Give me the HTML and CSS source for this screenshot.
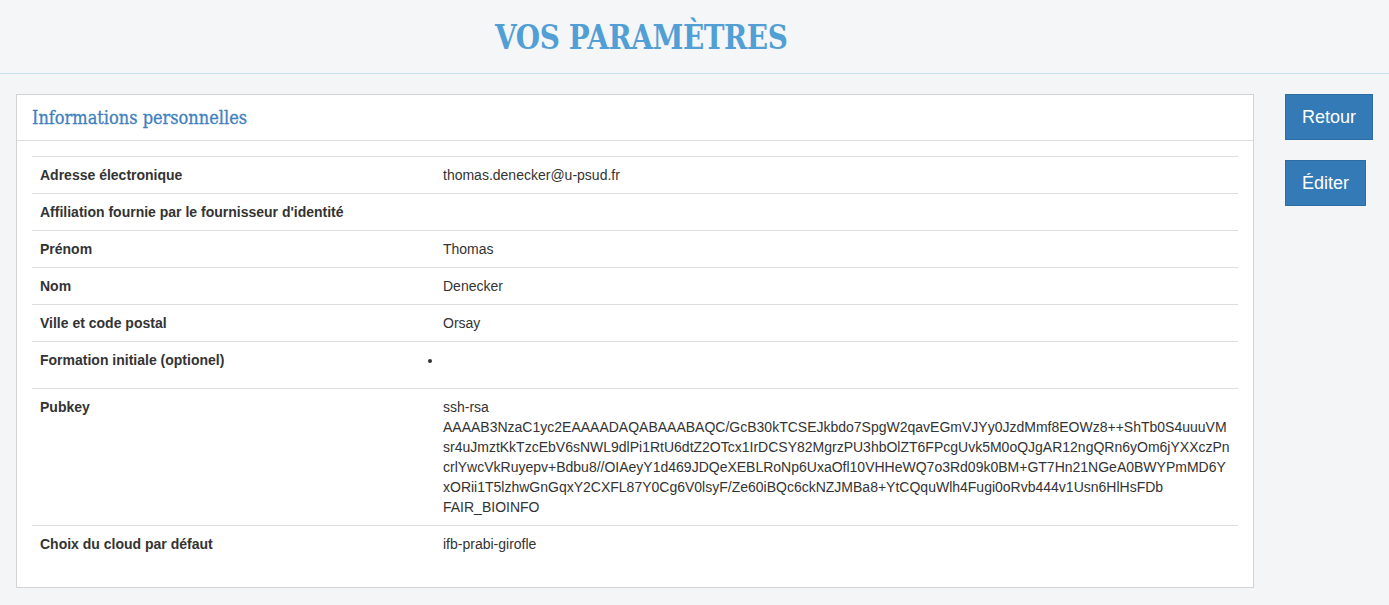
FILE: index.html
```html
<!DOCTYPE html>
<html lang="fr">
<head>
<meta charset="utf-8">
<title>Vos paramètres</title>
<link rel="stylesheet" href="styles.css">
</head>
<body>
<header class="page-header">
  <div class="header-main"><h1 class="page-title"><span class="title-text">VOS PARAMÈTRES</span></h1></div>
  <div class="header-side"></div>
</header>
<div class="layout">
  <main class="main-col">
    <section class="panel">
      <div class="panel-heading"><h3 class="panel-title">Informations personnelles</h3></div>
      <div class="panel-body">
        <table class="info-table">
          <tbody>
            <tr><th>Adresse électronique</th><td>thomas.denecker@u-psud.fr</td></tr>
            <tr><th>Affiliation fournie par le fournisseur d'identité</th><td></td></tr>
            <tr><th>Prénom</th><td>Thomas</td></tr>
            <tr><th>Nom</th><td>Denecker</td></tr>
            <tr><th>Ville et code postal</th><td>Orsay</td></tr>
            <tr><th>Formation initiale (optionel)</th><td><ul class="bullets"><li></li></ul></td></tr>
            <tr><th>Pubkey</th><td class="key">ssh-rsa<br>AAAAB3NzaC1yc2EAAAADAQABAAABAQC/GcB30kTCSEJkbdo7SpgW2qavEGmVJYy0JzdMmf8EOWz8++ShTb0S4uuuVM<br>sr4uJmztKkTzcEbV6sNWL9dlPi1RtU6dtZ2OTcx1IrDCSY82MgrzPU3hbOlZT6FPcgUvk5M0oQJgAR12ngQRn6yOm6jYXXczPn<br>crlYwcVkRuyepv+Bdbu8//OIAeyY1d469JDQeXEBLRoNp6UxaOfl10VHHeWQ7o3Rd09k0BM+GT7Hn21NGeA0BWYPmMD6Y<br>xORii1T5lzhwGnGqxY2CXFL87Y0Cg6V0lsyF/Ze60iBQc6ckNZJMBa8+YtCQquWlh4Fugi0oRvb444v1Usn6HlHsFDb<br>FAIR_BIOINFO</td></tr>
            <tr><th>Choix du cloud par défaut</th><td>ifb-prabi-girofle</td></tr>
          </tbody>
        </table>
      </div>
    </section>
  </main>
  <aside class="side-col">
    <a class="btn" href="#">Retour</a>
    <a class="btn" href="#">Éditer</a>
  </aside>
</div>
</body>
</html>
```
FILE: styles.css
```css
* { box-sizing: border-box; }
html, body { margin: 0; padding: 0; }
body {
  background: #f4f5f7;
  font-family: "Liberation Sans", Arial, sans-serif;
  font-size: 14px;
  line-height: 20px;
  color: #333;
  width: 1389px;
  height: 605px;
  overflow: hidden;
}
.page-header {
  display: flex;
  height: 74px;
  border-bottom: 1px solid #c6e0ee;
  background: #f5f6f8;
}
.header-main { width: 1270px; padding-left: 12px; text-align: center; }
.header-side { flex: 1; }
.page-title {
  margin: 0;
  padding-top: 17px;
  font-family: "DejaVu Serif", serif;
  font-weight: bold;
  font-size: 34px;
  line-height: 40px;
  color: #529fd6;
  letter-spacing: -0.5px;
}
.title-text {
  display: inline-block;
  transform: scaleX(0.82);
  transform-origin: 50% 50%;
}
.layout { display: flex; padding-top: 20px; }
.main-col { width: 1270px; padding: 0 16px; }
.side-col {
  flex: 1;
  padding-left: 15px;
  display: flex;
  flex-direction: column;
  align-items: flex-start;
  gap: 20px;
}
.panel {
  background: #fff;
  border: 1px solid #d3d3d3;
  height: 494px;
}
.panel-heading {
  height: 46px;
  border-bottom: 1px solid #ddd;
  padding: 0 15px;
  display: flex;
  align-items: center;
}
.panel-title {
  margin: 0;
  font-family: "DejaVu Serif", serif;
  font-stretch: condensed;
  font-weight: normal;
  font-size: 18px;
  color: #3f80c0;
  -webkit-text-stroke: 0.3px #3f80c0;
}
.panel-body { padding: 15px; }
.info-table { width: 100%; border-collapse: collapse; }
.info-table th, .info-table td {
  padding: 8px;
  border-top: 1px solid #ddd;
  vertical-align: top;
  text-align: left;
}
.info-table th { width: 403px; font-weight: bold; }
.key { word-break: break-all; }
.bullets { margin: 0 0 10px; padding: 0; }
.bullets li { height: 20px; }
.btn {
  display: inline-block;
  background: #337ab7;
  border: 1px solid #2e6da4;
  color: #fff;
  text-decoration: none;
  font-size: 18px;
  line-height: 24px;
  padding: 10px 16px;
  height: 46px;
}
```
